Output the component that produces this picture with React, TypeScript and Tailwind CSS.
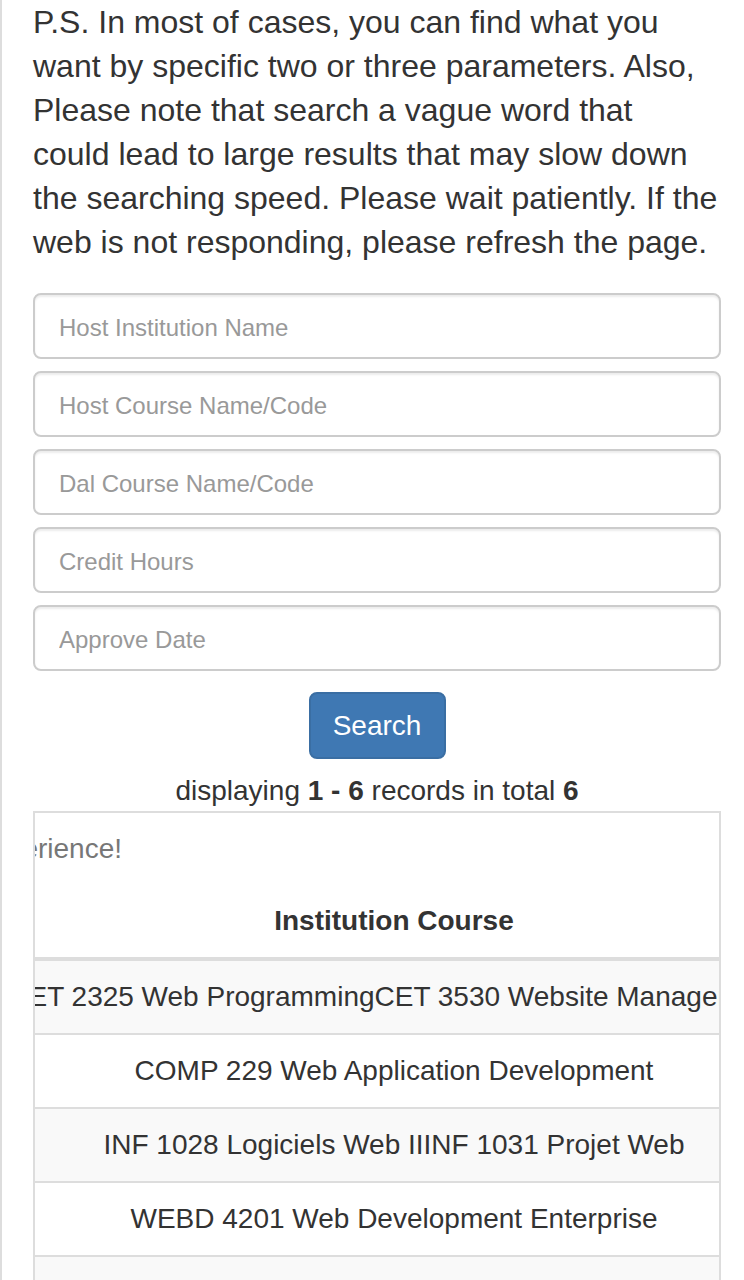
import React from "react";

const fields = [
  "Host Institution Name",
  "Host Course Name/Code",
  "Dal Course Name/Code",
  "Credit Hours",
  "Approve Date",
];

const rows = [
  "CET 2325 Web ProgrammingCET 3530 Website Management",
  "COMP 229 Web Application Development",
  "INF 1028 Logiciels Web IIINF 1031 Projet Web",
  "WEBD 4201 Web Development Enterprise",
  "WEB 1101 Web Design Fundamentals",
  "CSCI 2170 Introduction to Server Side Scripting",
];

export default function App() {
  return (
    <div
      className="min-h-screen border-l-2 border-[#ddd] bg-white text-[#333]"
      style={{ fontFamily: '"Liberation Sans", Arial, Helvetica, sans-serif' }}
    >
      <div className="pl-[31px] pr-[23px]">
        <p className="text-[32px] leading-[44px]">
          P.S. In most of cases, you can find what you
          <br />
          want by specific two or three parameters. Also,
          <br />
          Please note that search a vague word that
          <br />
          could lead to large results that may slow down
          <br />
          the searching speed. Please wait patiently. If the
          <br />
          web is not responding, please refresh the page.
        </p>

        <form className="mt-[29px] flex flex-col gap-[12px]">
          {fields.map((f) => (
            <input
              key={f}
              type="text"
              placeholder={f}
              className="h-[66px] w-full rounded-[8px] border-2 border-[#ccc] bg-white px-[24px] pt-[3px] text-[24px] text-[#555] placeholder:text-[#999] shadow-[inset_0_2px_2px_rgba(0,0,0,0.075)] outline-none"
            />
          ))}
          <div className="mt-[9px] flex justify-center">
            <button
              type="button"
              className="h-[67px] w-[137px] rounded-[8px] border-2 border-[#3a6ea3] bg-[#3f78b3] text-[28px] text-white"
            >
              Search
            </button>
          </div>
        </form>

        <div className="mt-[12px] text-center text-[28px] leading-[40px]">
          displaying <b>1 - 6</b> records in total <b>6</b>
        </div>

        <div className="overflow-hidden border-2 border-[#ddd] text-[28px] leading-[40px]">
          <div className="flex w-[87px] justify-end whitespace-nowrap py-[16px] text-[#777]">
            Please share your experience!
          </div>
          <div className="flex justify-center whitespace-nowrap border-b-4 border-[#ddd] py-[16px] pl-[34px] font-bold">
            Institution Course
          </div>
          {rows.map((r, i) => (
            <div
              key={r}
              className={
                i % 2 === 0
                  ? "flex justify-center whitespace-nowrap border-b-2 border-[#ddd] bg-[#f9f9f9] py-[16px] pl-[34px]"
                  : "flex justify-center whitespace-nowrap border-b-2 border-[#ddd] bg-white py-[16px] pl-[34px]"
              }
            >
              {r}
            </div>
          ))}
        </div>
      </div>
    </div>
  );
}
